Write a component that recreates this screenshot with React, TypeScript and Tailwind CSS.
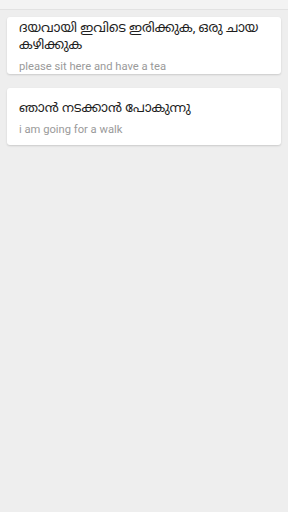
const items = [
  { ml: "ദയവായി ഇവിടെ ഇരിക്കുക, ഒരു ചായ കഴിക്കുക", en: "please sit here and have a tea" },
  { ml: "ഞാൻ നടക്കാൻ പോകുന്നു", en: "i am going for a walk" },
];

export default function App() {
  return (
    <div className="min-h-[512px] bg-[#eeeeee] font-['Roboto','Noto_Sans_Malayalam','Noto_Sans',sans-serif]">
      <div className="h-[10px] border-b border-[#e2e2e2] bg-[#f3f3f3]" />

      <div className="flex flex-col gap-[14px] px-[7px] pt-[7px]">
        {items.map((item) => (
          <div
            key={item.en}
            className="flex h-[57px] flex-col justify-center rounded-[3px] bg-white px-[12px] pt-[2px] shadow-[0_1px_2px_rgba(0,0,0,0.15)]"
          >
            <p className="text-[13.2px] leading-[17px] text-[#1e1e1e]">{item.ml}</p>
            <p className="mt-[6px] text-[11.2px] leading-[15px] text-[#9a9a9a]">{item.en}</p>
          </div>
        ))}
      </div>
    </div>
  );
}
